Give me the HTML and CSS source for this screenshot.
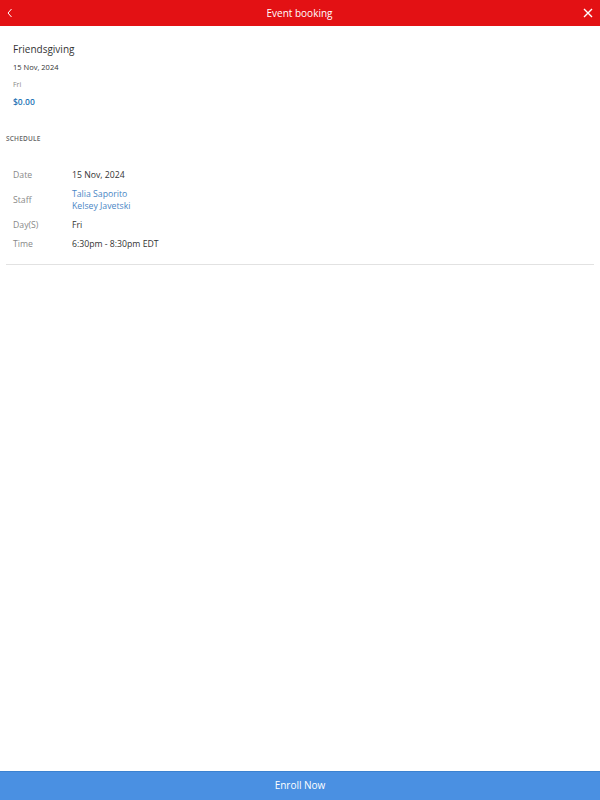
FILE: index.html
```
<!DOCTYPE html>
<html>
<head>
    <title>Event booking</title>
    <link rel="stylesheet" href="styles.css">
</head>
<body>
    <div class="page">
        <div class="topbar">
            <span class="back">
                <svg width="8" height="10" viewBox="0 0 8 10"><path d="M5.5 1 L2 5 L5.5 9" fill="none" stroke="#fff" stroke-width="1"/></svg>
            </span>
            <span class="title">Event booking</span>
            <span class="close">
                <svg width="10" height="10" viewBox="0 0 10 10"><path d="M1 1 L9 9 M9 1 L1 9" fill="none" stroke="#fff" stroke-width="1.4"/></svg>
            </span>
        </div>

        <div class="content">
            <div class="event">
                <div class="event-name">Friendsgiving</div>
                <div class="event-date">15 Nov, 2024</div>
                <div class="event-day">Fri</div>
                <div class="event-price">$0.00</div>
            </div>

            <div class="section-label">SCHEDULE</div>

            <div class="schedule">
                <div class="row">
                    <div class="label">Date</div>
                    <div class="value">15 Nov, 2024</div>
                </div>
                <div class="row">
                    <div class="label">Staff</div>
                    <div class="value staff">
                        <div>Talia Saporito</div>
                        <div>Kelsey Javetski</div>
                    </div>
                </div>
                <div class="row">
                    <div class="label">Day(S)</div>
                    <div class="value">Fri</div>
                </div>
                <div class="row">
                    <div class="label">Time</div>
                    <div class="value">6:30pm - 8:30pm EDT</div>
                </div>
            </div>
        </div>

        <button class="enroll">Enroll Now</button>
    </div>
</body>
</html>
```
FILE: styles.css
```
body, html {
    height: 100%;
    margin: 0;
    font-family: "Open Sans", Arial, sans-serif;
    background: #fff;
}

.page {
    height: 100%;
    display: flex;
    flex-direction: column;
}

.topbar {
    height: 26px;
    background-color: #e31114;
    color: #fff;
    display: flex;
    align-items: center;
    justify-content: space-between;
    padding: 0 7px 0 6px;
    flex-shrink: 0;
}

.topbar .title {
    font-size: 10px;
}

.back, .close {
    display: flex;
    align-items: center;
    width: 10px;
}

.content {
    flex: 1;
    padding: 0 6px;
}

.event {
    padding: 16px 7px 0;
}

.event-name {
    font-size: 10px;
    color: #333;
    line-height: 15px;
}

.event-date {
    font-size: 7.5px;
    color: #333;
    margin-top: 4px;
    line-height: 12px;
}

.event-day {
    font-size: 7px;
    color: #888;
    margin-top: 6px;
    line-height: 12px;
}

.event-price {
    font-size: 8.5px;
    color: #2474b5;
    font-weight: 600;
    margin-top: 5px;
    line-height: 12px;
}

.section-label {
    font-size: 6.5px;
    color: #666;
    font-weight: 600;
    letter-spacing: 0.2px;
    margin-top: 26px;
    line-height: 10px;
}

.schedule {
    padding: 25px 7px 14px;
    border-bottom: 1px solid #e2e2e2;
    display: flex;
    flex-direction: column;
    gap: 7px;
}

.row {
    display: flex;
    align-items: center;
    font-size: 8.7px;
    line-height: 12px;
}

.label {
    width: 59px;
    color: #888;
}

.value {
    color: #333;
}

.staff {
    color: #4a86c5;
}

.enroll {
    height: 29px;
    flex-shrink: 0;
    border: none;
    border-top: 1px solid #3c82d0;
    background-color: #4a90e2;
    color: #fff;
    font-family: "Open Sans", Arial, sans-serif;
    font-size: 10px;
    padding: 0 0 2px;
    width: 100%;
}
```
